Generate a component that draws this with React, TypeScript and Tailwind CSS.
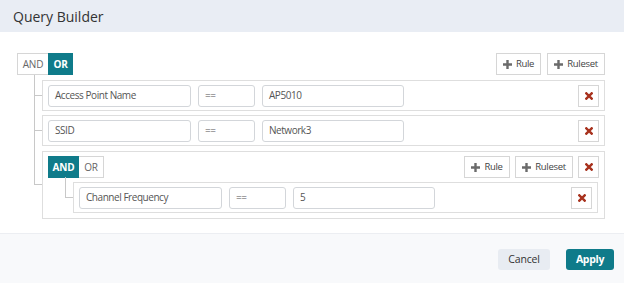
import React from "react";

const TEAL = "bg-[#0f7b8a]";

const PlusIcon = () => (
  <svg width="9" height="9" viewBox="0 0 9 9" className="shrink-0">
    <path d="M3.3 0h2.4v3.3H9v2.4H5.7V9H3.3V5.7H0V3.3h3.3z" fill="#6b6b6b" />
  </svg>
);

const XIcon = () => (
  <svg width="8" height="8" viewBox="0 0 8 8">
    <path d="M1.3 1.3l5.4 5.4M6.7 1.3l-5.4 5.4" stroke="#a8321e" strokeWidth="2.4" strokeLinecap="square" />
  </svg>
);

const AndOr = ({ active }: { active: "AND" | "OR" }) => (
  <div className="flex h-[22px] text-[10px] tracking-[-0.2px]">
    <span
      className={
        active === "AND"
          ? `w-[31px] flex items-center justify-center ${TEAL} text-white font-bold`
          : "w-[31px] flex items-center justify-center border border-r-0 border-[#d6d6d6] text-[#666]"
      }
    >
      AND
    </span>
    <span
      className={
        active === "OR"
          ? `w-[25px] flex items-center justify-center ${TEAL} text-white font-bold`
          : "w-[25px] flex items-center justify-center border border-l-0 border-[#d6d6d6] text-[#666]"
      }
    >
      OR
    </span>
  </div>
);

const AddButton = ({ label, w }: { label: string; w: string }) => (
  <button
    className={`${w} h-[22px] flex items-center justify-center gap-[4px] border border-[#d6d6d6] bg-white text-[9.5px] tracking-[-0.3px] text-[#444]`}
  >
    <PlusIcon />
    {label}
  </button>
);

const DeleteButton = () => (
  <button className="w-[21px] h-[22px] flex items-center justify-center border border-[#d6d6d6] bg-white">
    <XIcon />
  </button>
);

const Field = ({ value, w }: { value: string; w: string }) => (
  <div
    className={`${w} h-[22px] flex items-center px-[6px] border border-[#d3d6da] rounded-[3px] text-[10px] tracking-[-0.45px] text-[#555]`}
  >
    {value}
  </div>
);

type RuleData = { field: string; value: string };

const Rule = ({ rule }: { rule: RuleData }) => (
  <div className="h-[31px] flex items-center gap-[7px] pl-[5px] pr-[5px] border border-[#dedede] bg-white">
    <Field value={rule.field} w="w-[143px]" />
    <Field value="==" w="w-[57px]" />
    <Field value={rule.value} w="w-[142px]" />
    <div className="ml-auto">
      <DeleteButton />
    </div>
  </div>
);

// tree connector drawn to the left of each child
const Branch = ({ last, first, children }: { last: boolean; first: boolean; children: React.ReactNode }) => (
  <div className="relative">
    <span
      className={`absolute left-[-8px] w-[8px] border-l border-b border-[#c8c8c8] ${
        first ? "top-[-5px] h-[calc(50%+5px)]" : "top-[-4px] h-[calc(50%+4px)]"
      }`}
    />
    {!last && <span className="absolute left-[-8px] top-1/2 h-[calc(50%+1px)] border-l border-[#c8c8c8]" />}
    {children}
  </div>
);

const rootRules: RuleData[] = [
  { field: "Access Point Name", value: "AP5010" },
  { field: "SSID", value: "Network3" },
];

export default function App() {
  return (
    <div className="w-[624px] h-[283px] flex flex-col bg-white font-['Open_Sans',sans-serif]">
      <header className="h-8 shrink-0 flex items-center pl-[13px] bg-[#e9edf4] text-[14px] text-[#333]">
        Query Builder
      </header>

      <main className="flex-1 pt-[21px] pl-[17px] pr-[19px]">
        <div className="flex items-center justify-between">
          <AndOr active="OR" />
          <div className="flex gap-[6px]">
            <AddButton label="Rule" w="w-[45px]" />
            <AddButton label="Ruleset" w="w-[58px]" />
          </div>
        </div>

        <div className="mt-[5px] pl-[25px] flex flex-col gap-[4px]">
          {rootRules.map((r, i) => (
            <Branch key={r.field} first={i === 0} last={false}>
              <Rule rule={r} />
            </Branch>
          ))}
          <Branch first={false} last>
            <div className="mt-[1px] border border-[#dedede] pt-[4px] pl-[5px] pr-[5px] pb-[5px]">
              <div className="flex items-center">
                <AndOr active="AND" />
                <div className="ml-auto flex gap-[5px]">
                  <AddButton label="Rule" w="w-[46px]" />
                  <AddButton label="Ruleset" w="w-[58px]" />
                  <DeleteButton />
                </div>
              </div>
              <div className="mt-[4px] pl-[25px] pr-[1px]">
                <Branch first last>
                  <Rule rule={{ field: "Channel Frequency", value: "5" }} />
                </Branch>
              </div>
            </div>
          </Branch>
        </div>
      </main>

      <footer className="h-[50px] shrink-0 flex items-center justify-end gap-[16px] pr-[10px] pt-[2px] border-t border-[#eceef2] bg-[#f8f9fb]">
        <button className="w-[52px] h-[21px] rounded-[3px] bg-[#e8ecf2] text-[10.5px] tracking-[-0.2px] text-[#333]">
          Cancel
        </button>
        <button className={`w-[48px] h-[21px] rounded-[3px] ${TEAL} text-[10.5px] tracking-[-0.3px] font-bold text-white`}>
          Apply
        </button>
      </footer>
    </div>
  );
}
